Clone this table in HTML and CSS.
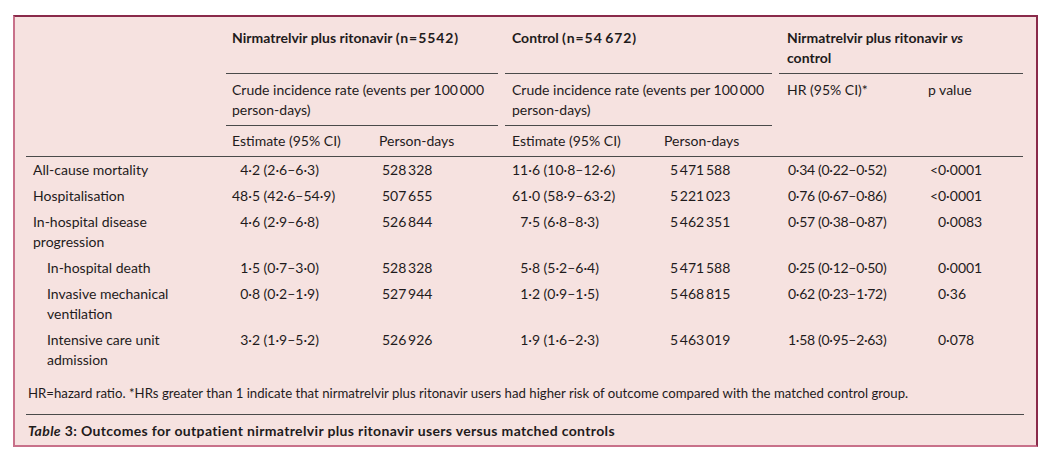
FILE: index.html
```html
<!DOCTYPE html>
<html lang="en">
<head>
<meta charset="utf-8">
<title>Table 3</title>
<link rel="stylesheet" href="styles.css">
</head>
<body>
<div class="card">
  <div class="grid">
    <div class="h-label"></div>
    <div class="h-group g1">Nirmatrelvir plus ritonavir <span class="n">(n=5542)</span></div>
    <div class="h-group g2">Control <span class="n">(n=54&#8201;672)</span></div>
    <div class="h-group g3">Nirmatrelvir plus ritonavir <i>vs</i><br>control</div>

    <div class="h-sub s1">Crude incidence rate (events per 100&#8201;000<br>person-days)</div>
    <div class="h-sub s2">Crude incidence rate (events per 100&#8201;000<br>person-days)</div>
    <div class="h-hr">HR (95% CI)*</div>
    <div class="h-p">p value</div>

    <div class="h-col c2">Estimate (95% CI)</div>
    <div class="h-col c3">Person-days</div>
    <div class="h-col c4">Estimate (95% CI)</div>
    <div class="h-col c5">Person-days</div>

    <div class="row">
      <div class="lab">All-cause mortality</div>
      <div class="est"><span class="fig">&#8199;</span>4·2 (2·6–6·3)</div>
      <div class="pd">528&#8201;328</div>
      <div class="est2">11·6 (10·8–12·6)</div>
      <div class="pd2">5&#8201;471&#8201;588</div>
      <div class="hr">0·34 (0·22–0·52)</div>
      <div class="p"><span class="lt">&lt;</span>0·0001</div>
    </div>
    <div class="row">
      <div class="lab">Hospitalisation</div>
      <div class="est">48·5 (42·6–54·9)</div>
      <div class="pd">507&#8201;655</div>
      <div class="est2">61·0 (58·9–63·2)</div>
      <div class="pd2">5&#8201;221&#8201;023</div>
      <div class="hr">0·76 (0·67–0·86)</div>
      <div class="p"><span class="lt">&lt;</span>0·0001</div>
    </div>
    <div class="row">
      <div class="lab">In-hospital disease progression</div>
      <div class="est"><span class="fig">&#8199;</span>4·6 (2·9–6·8)</div>
      <div class="pd">526&#8201;844</div>
      <div class="est2"><span class="fig">&#8199;</span>7·5 (6·8–8·3)</div>
      <div class="pd2">5&#8201;462&#8201;351</div>
      <div class="hr">0·57 (0·38–0·87)</div>
      <div class="p">0·0083</div>
    </div>
    <div class="row">
      <div class="lab sub">In-hospital death</div>
      <div class="est"><span class="fig">&#8199;</span>1·5 (0·7–3·0)</div>
      <div class="pd">528&#8201;328</div>
      <div class="est2"><span class="fig">&#8199;</span>5·8 (5·2–6·4)</div>
      <div class="pd2">5&#8201;471&#8201;588</div>
      <div class="hr">0·25 (0·12–0·50)</div>
      <div class="p">0·0001</div>
    </div>
    <div class="row">
      <div class="lab sub">Invasive mechanical ventilation</div>
      <div class="est"><span class="fig">&#8199;</span>0·8 (0·2–1·9)</div>
      <div class="pd">527&#8201;944</div>
      <div class="est2"><span class="fig">&#8199;</span>1·2 (0·9–1·5)</div>
      <div class="pd2">5&#8201;468&#8201;815</div>
      <div class="hr">0·62 (0·23–1·72)</div>
      <div class="p">0·36</div>
    </div>
    <div class="row">
      <div class="lab sub">Intensive care unit admission</div>
      <div class="est"><span class="fig">&#8199;</span>3·2 (1·9–5·2)</div>
      <div class="pd">526&#8201;926</div>
      <div class="est2"><span class="fig">&#8199;</span>1·9 (1·6–2·3)</div>
      <div class="pd2">5&#8201;463&#8201;019</div>
      <div class="hr">1·58 (0·95–2·63)</div>
      <div class="p">0·078</div>
    </div>
  </div>
  <p class="note">HR=hazard ratio. *HRs greater than 1 indicate that nirmatrelvir plus ritonavir users had higher risk of outcome compared with the matched control group.</p>
  <p class="caption"><i>Table</i> 3: Outcomes for outpatient nirmatrelvir plus ritonavir users versus matched controls</p>
</div>
</body>
</html>
```

FILE: styles.css
```css
* { box-sizing: border-box; }

body {
  margin: 0;
  background: #ffffff;
  font-family: Lato, "Open Sans", "Liberation Sans", sans-serif;
  font-size: 14px;
  line-height: 20px;
  color: #1f1b1c;
}

.card {
  margin: 15px 0 0 13px;
  width: 1025px;
  height: 432px;
  background: #f6e2e0;
  border-top: 2px solid #8a2a4a;
  border-right: 2px solid #8a2a4a;
  border-left: 2px solid #c8718a;
  border-bottom: 2px solid #c8718a;
  padding: 11px 12px 3px 11px;
}

.grid {
  display: grid;
  grid-template-columns: 200px 147px 132px 152px 122px 142px 102px;
}

.grid > div, .row > div {
  min-width: 0;
}

.h-label {
  grid-column: 1;
  grid-row: 1 / 4;
  border-bottom: 1px solid #4a4a4a;
}

.h-group {
  grid-row: 1;
  font-weight: 700;
  padding-bottom: 5px;
  border-bottom: 1px solid #4a4a4a;
}
.h-group .n { letter-spacing: 0.9px; }
.h-group.g1 { grid-column: 2 / 4; margin-right: 7px; padding-left: 6px; }
.h-group.g2 { grid-column: 4 / 6; margin-right: 7px; padding-left: 7px; }
.h-group.g3 { grid-column: 6 / 8; padding-left: 8px; }

.h-sub {
  grid-row: 2;
  padding: 6px 0 5px;
  border-bottom: 1px solid #4a4a4a;
}
.h-sub.s1 { grid-column: 2 / 4; margin-right: 7px; padding-left: 6px; }
.h-sub.s2 { grid-column: 4 / 6; margin-right: 7px; padding-left: 7px; }

.h-hr, .h-p {
  grid-row: 2 / 4;
  padding-top: 6px;
  border-bottom: 1px solid #4a4a4a;
}
.h-hr { grid-column: 6; padding-left: 8px; }
.h-p { grid-column: 7; padding-left: 7px; }

.h-col {
  grid-row: 3;
  padding: 5px 0 5px;
  border-bottom: 1px solid #4a4a4a;
}
.h-col.c2 { grid-column: 2; padding-left: 6px; }
.h-col.c3 { grid-column: 3; padding-left: 6px; }
.h-col.c4 { grid-column: 4; padding-left: 7px; }
.h-col.c5 { grid-column: 5; padding-left: 7px; }

.row { display: contents; }
.row > div { padding-top: 3px; padding-bottom: 3px; }

.lab { padding-left: 7px; padding-right: 30px; }
.lab.sub { padding-left: 21px; }
.est { padding-left: 6px; }
.pd { padding-left: 9px; }
.est2 { padding-left: 7px; }
.pd2 { padding-left: 13px; }
.hr { padding-left: 9px; letter-spacing: -0.3px; }
.p { padding-left: 17px; }

.fig { font-variant-numeric: tabular-nums; }
.lt { display: inline-block; width: 8px; margin-left: -8px; }

.note {
  margin: 10px 0 0;
  padding: 0 0 11px 2px;
  font-size: 13.2px;
  border-bottom: 1px solid #4a4a4a;
}

.caption {
  margin: 6px 0 0;
  padding-left: 2px;
  font-weight: 700;
  letter-spacing: 0.35px;
}
```
